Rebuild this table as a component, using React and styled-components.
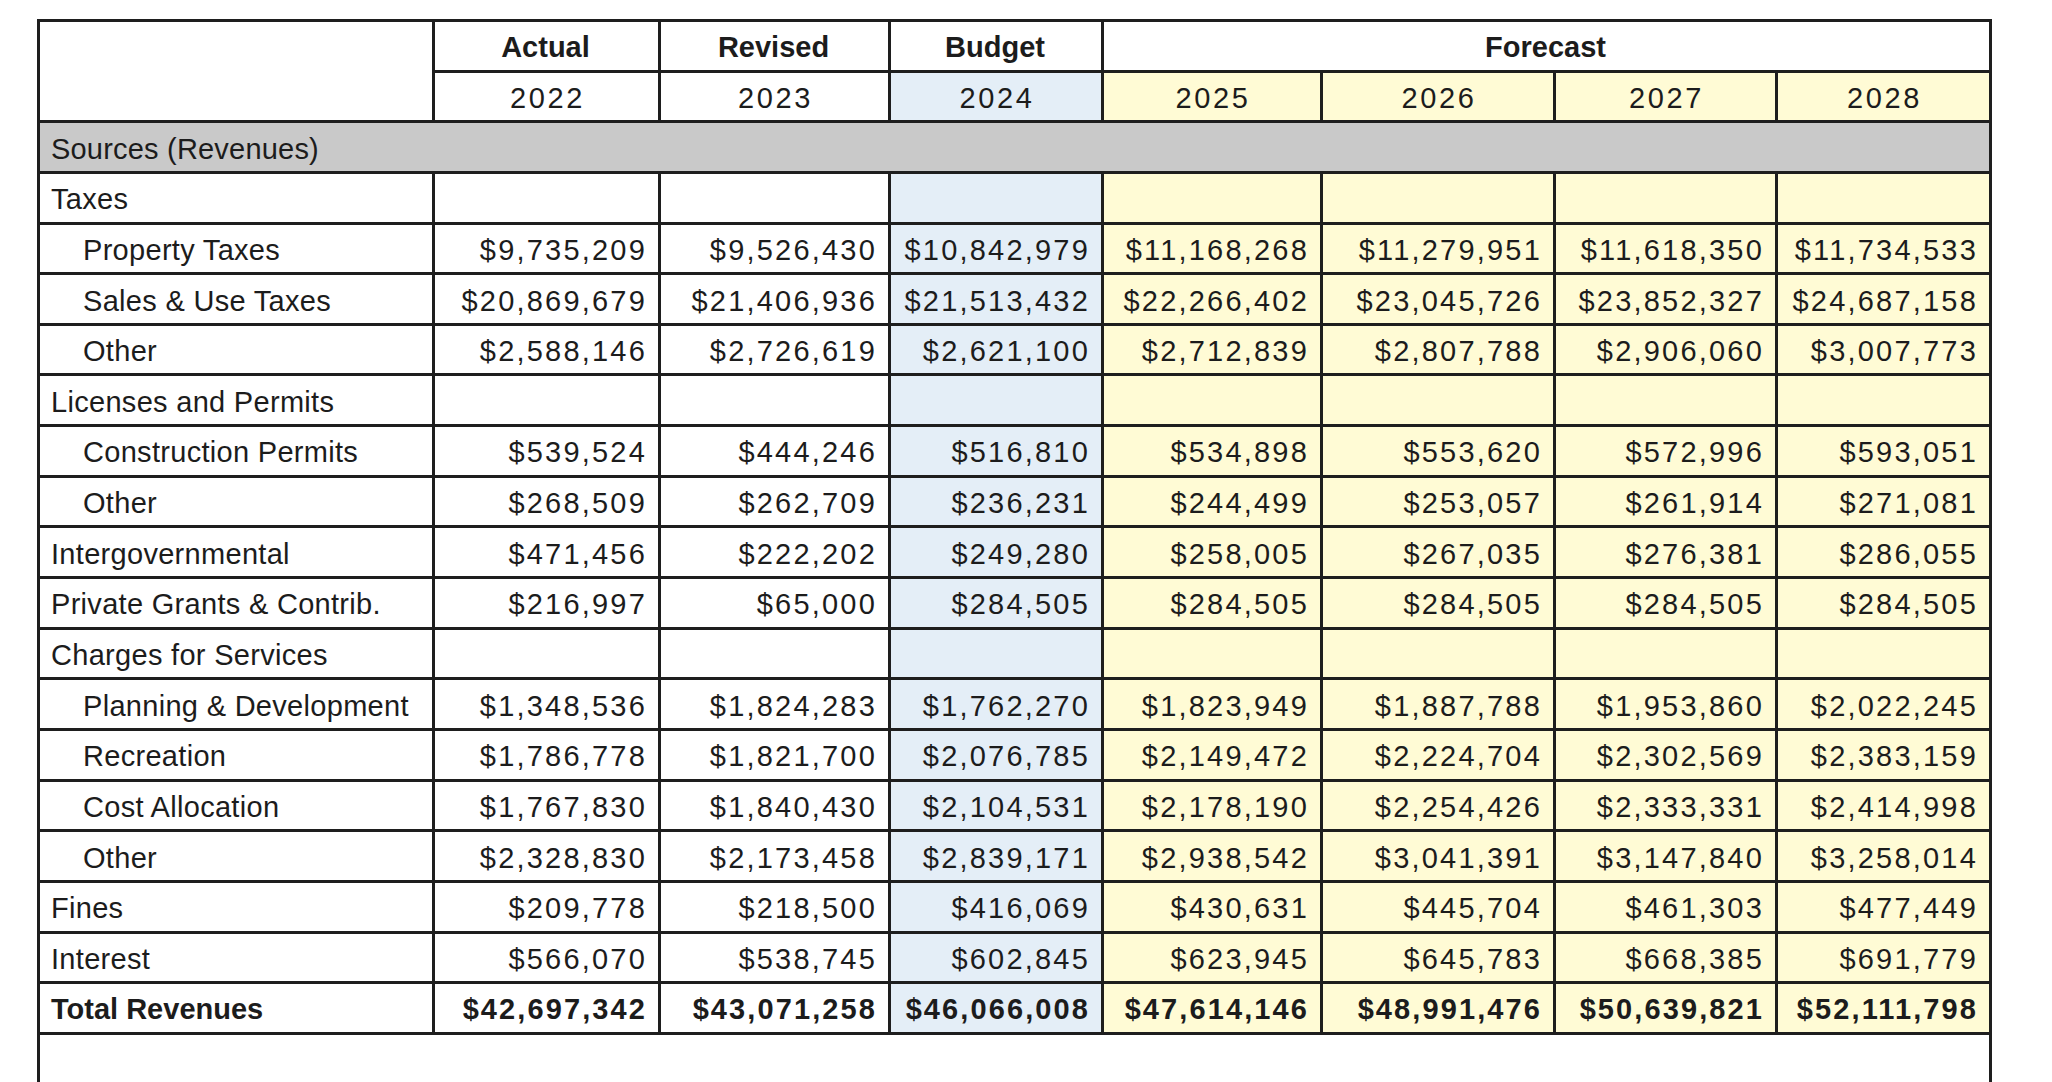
import styled, { createGlobalStyle } from 'styled-components';

const GlobalStyle = createGlobalStyle`
  html, body {
    margin: 0;
    padding: 0;
    background: #ffffff;
  }

  body {
    font-family: 'Liberation Sans', Arial, sans-serif;
    color: #1c1c1c;
  }
`;

const Page = styled.div`
  padding: 19px 0 0 37px;
`;

const Table = styled.table`
  border-collapse: collapse;
  table-layout: fixed;
  width: 1955px;
  border: 3px solid #1e1e1e;
  font-family: 'Liberation Sans', Arial, sans-serif;
  font-size: 29px;

  & td, & th {
    font-family: 'Liberation Sans', Arial, sans-serif;
    font-size: 29px;
    line-height: 33px;
    color: #1c1c1c;
    border: 3px solid #1e1e1e;
    padding: 4px 13px 0 11px;
    white-space: nowrap;
    overflow: hidden;
  }

  & tr {
    height: 50.65px;
  }
`;

const TONES = {
  plain: '#ffffff',
  budget: '#e4eef7',
  forecast: '#fffbd5',
  section: '#c9c9c9',
};

const HeadCell = styled.th`
  background: ${(props) => TONES[props.$tone || 'plain']};
  font-weight: ${(props) => (props.$bold ? 700 : 400)};
  letter-spacing: ${(props) => (props.$bold ? '0' : '2.6px')};
  text-align: center;
  && {
    padding-left: ${(props) => (props.$bold ? '11px' : '15px')};
  }
`;

const LabelCell = styled.td`
  background: #ffffff;
  text-align: left;
  font-weight: ${(props) => (props.$bold ? 700 : 400)};
  letter-spacing: ${(props) => (props.$bold ? '0' : '0.3px')};
  && {
    padding-left: ${(props) => (props.$indent ? '43px' : '11px')};
  }
`;

const SectionCell = styled.td`
  background: ${TONES.section};
  text-align: left;
  letter-spacing: 0.2px;
`;

const ValueCell = styled.td`
  background: ${(props) => TONES[props.$tone]};
  text-align: right;
  font-weight: ${(props) => (props.$bold ? 700 : 400)};
  letter-spacing: ${(props) => (props.$bold ? '2.1px' : '2.2px')};
  && {
    padding-right: 11px;
  }
`;

const BlankCell = styled.td`
  background: #ffffff;
  && {
    height: 80px;
    border-bottom: none;
  }
`;

const COLUMN_WIDTHS = [395, 226, 230, 213, 219, 233, 222, 214];
const COLUMN_TONES = ['plain', 'plain', 'budget', 'forecast', 'forecast', 'forecast', 'forecast'];
const YEARS = ['2022', '2023', '2024', '2025', '2026', '2027', '2028'];

const ROWS = [
  { section: true, label: 'Sources (Revenues)' },
  { label: 'Taxes' },
  { label: 'Property Taxes', indent: true, values: ['$9,735,209', '$9,526,430', '$10,842,979', '$11,168,268', '$11,279,951', '$11,618,350', '$11,734,533'] },
  { label: 'Sales & Use Taxes', indent: true, values: ['$20,869,679', '$21,406,936', '$21,513,432', '$22,266,402', '$23,045,726', '$23,852,327', '$24,687,158'] },
  { label: 'Other', indent: true, values: ['$2,588,146', '$2,726,619', '$2,621,100', '$2,712,839', '$2,807,788', '$2,906,060', '$3,007,773'] },
  { label: 'Licenses and Permits' },
  { label: 'Construction Permits', indent: true, values: ['$539,524', '$444,246', '$516,810', '$534,898', '$553,620', '$572,996', '$593,051'] },
  { label: 'Other', indent: true, values: ['$268,509', '$262,709', '$236,231', '$244,499', '$253,057', '$261,914', '$271,081'] },
  { label: 'Intergovernmental', values: ['$471,456', '$222,202', '$249,280', '$258,005', '$267,035', '$276,381', '$286,055'] },
  { label: 'Private Grants & Contrib.', values: ['$216,997', '$65,000', '$284,505', '$284,505', '$284,505', '$284,505', '$284,505'] },
  { label: 'Charges for Services' },
  { label: 'Planning & Development', indent: true, values: ['$1,348,536', '$1,824,283', '$1,762,270', '$1,823,949', '$1,887,788', '$1,953,860', '$2,022,245'] },
  { label: 'Recreation', indent: true, values: ['$1,786,778', '$1,821,700', '$2,076,785', '$2,149,472', '$2,224,704', '$2,302,569', '$2,383,159'] },
  { label: 'Cost Allocation', indent: true, values: ['$1,767,830', '$1,840,430', '$2,104,531', '$2,178,190', '$2,254,426', '$2,333,331', '$2,414,998'] },
  { label: 'Other', indent: true, values: ['$2,328,830', '$2,173,458', '$2,839,171', '$2,938,542', '$3,041,391', '$3,147,840', '$3,258,014'] },
  { label: 'Fines', values: ['$209,778', '$218,500', '$416,069', '$430,631', '$445,704', '$461,303', '$477,449'] },
  { label: 'Interest', values: ['$566,070', '$538,745', '$602,845', '$623,945', '$645,783', '$668,385', '$691,779'] },
  { label: 'Total Revenues', total: true, values: ['$42,697,342', '$43,071,258', '$46,066,008', '$47,614,146', '$48,991,476', '$50,639,821', '$52,111,798'] },
];

function BudgetRow({ row }) {
  if (row.section) {
    return (
      <tr>
        <SectionCell colSpan={8}>{row.label}</SectionCell>
      </tr>
    );
  }

  return (
    <tr>
      <LabelCell $indent={row.indent} $bold={row.total}>{row.label}</LabelCell>
      {COLUMN_TONES.map((tone, i) => (
        <ValueCell key={i} $tone={tone} $bold={row.total}>
          {row.values ? row.values[i] : ''}
        </ValueCell>
      ))}
    </tr>
  );
}

export default function App() {
  return (
    <>
      <GlobalStyle />
      <Page>
        <Table>
          <colgroup>
            {COLUMN_WIDTHS.map((w, i) => <col key={i} style={{ width: w }} />)}
          </colgroup>
          <thead>
            <tr>
              <HeadCell rowSpan={2} $bold />
              <HeadCell $bold>Actual</HeadCell>
              <HeadCell $bold>Revised</HeadCell>
              <HeadCell $bold>Budget</HeadCell>
              <HeadCell $bold colSpan={4}>Forecast</HeadCell>
            </tr>
            <tr>
              {YEARS.map((year, i) => (
                <HeadCell key={year} $tone={COLUMN_TONES[i]}>{year}</HeadCell>
              ))}
            </tr>
          </thead>
          <tbody>
            {ROWS.map((row, i) => <BudgetRow key={i} row={row} />)}
            <tr>
              <BlankCell colSpan={8} />
            </tr>
          </tbody>
        </Table>
      </Page>
    </>
  );
}
